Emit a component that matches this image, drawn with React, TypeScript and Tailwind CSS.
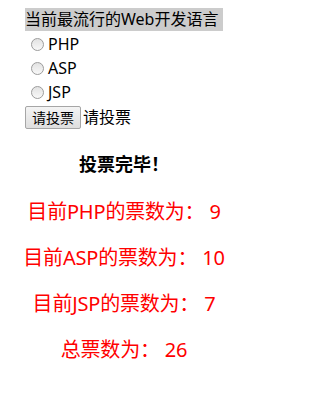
import React from 'react';

const options = ['PHP', 'ASP', 'JSP'];

const results = [
  { name: 'PHP', count: 9 },
  { name: 'ASP', count: 10 },
  { name: 'JSP', count: 7 },
];

export default function App() {
  const total = results.reduce((sum, r) => sum + r.count, 0);

  return (
    <div className="min-h-[397px] w-[272px] bg-white text-black font-['Noto_Sans','Noto_Sans_CJK_SC',sans-serif]">
      <div className="ml-[25px] w-[198px] pt-[8px]">
        <div className="h-[23px] bg-[#cccccc] text-[16px] leading-[23px] whitespace-nowrap">当前最流行的Web开发语言</div>
        <form className="pt-[1px] text-[16px]">
          {options.map((opt) => (
            <label key={opt} className="flex h-[24px] items-center pl-[6px]">
              <input
                type="radio"
                name="lang"
                className="m-0 h-[13px] w-[13px] appearance-none rounded-full border border-[#9c9c9c] bg-gradient-to-b from-[#e2e2e2] to-[#f8f8f8]"
              />
              <span className="ml-[4px] leading-[24px]">{opt}</span>
            </label>
          ))}
          <div className="flex items-center pt-[1px]">
            <button
              type="button"
              className="h-[23px] w-[56px] rounded-[2px] border border-[#a6a6a6] bg-gradient-to-b from-[#f4f4f4] to-[#dedede] text-[14px] leading-[21px]"
            >
              请投票
            </button>
            <span className="ml-[2px]">请投票</span>
          </div>
        </form>
      </div>
      <div className="w-[248px] text-center whitespace-nowrap">
        <div className="mt-[23px] text-[18px] font-bold leading-[24px]">投票完毕！</div>
        <div className="text-[20px] leading-[26px] tracking-[-0.2px] text-[#ff0000]">
          {results.map((r, i) => (
            <p key={r.name} className={i === 0 ? 'mt-[23px]' : 'mt-[20px]'}>
              目前{r.name}的票数为：{' '}{r.count}
            </p>
          ))}
          <p className="mt-[20px]">总票数为：{' '}{total}</p>
        </div>
      </div>
    </div>
  );
}
